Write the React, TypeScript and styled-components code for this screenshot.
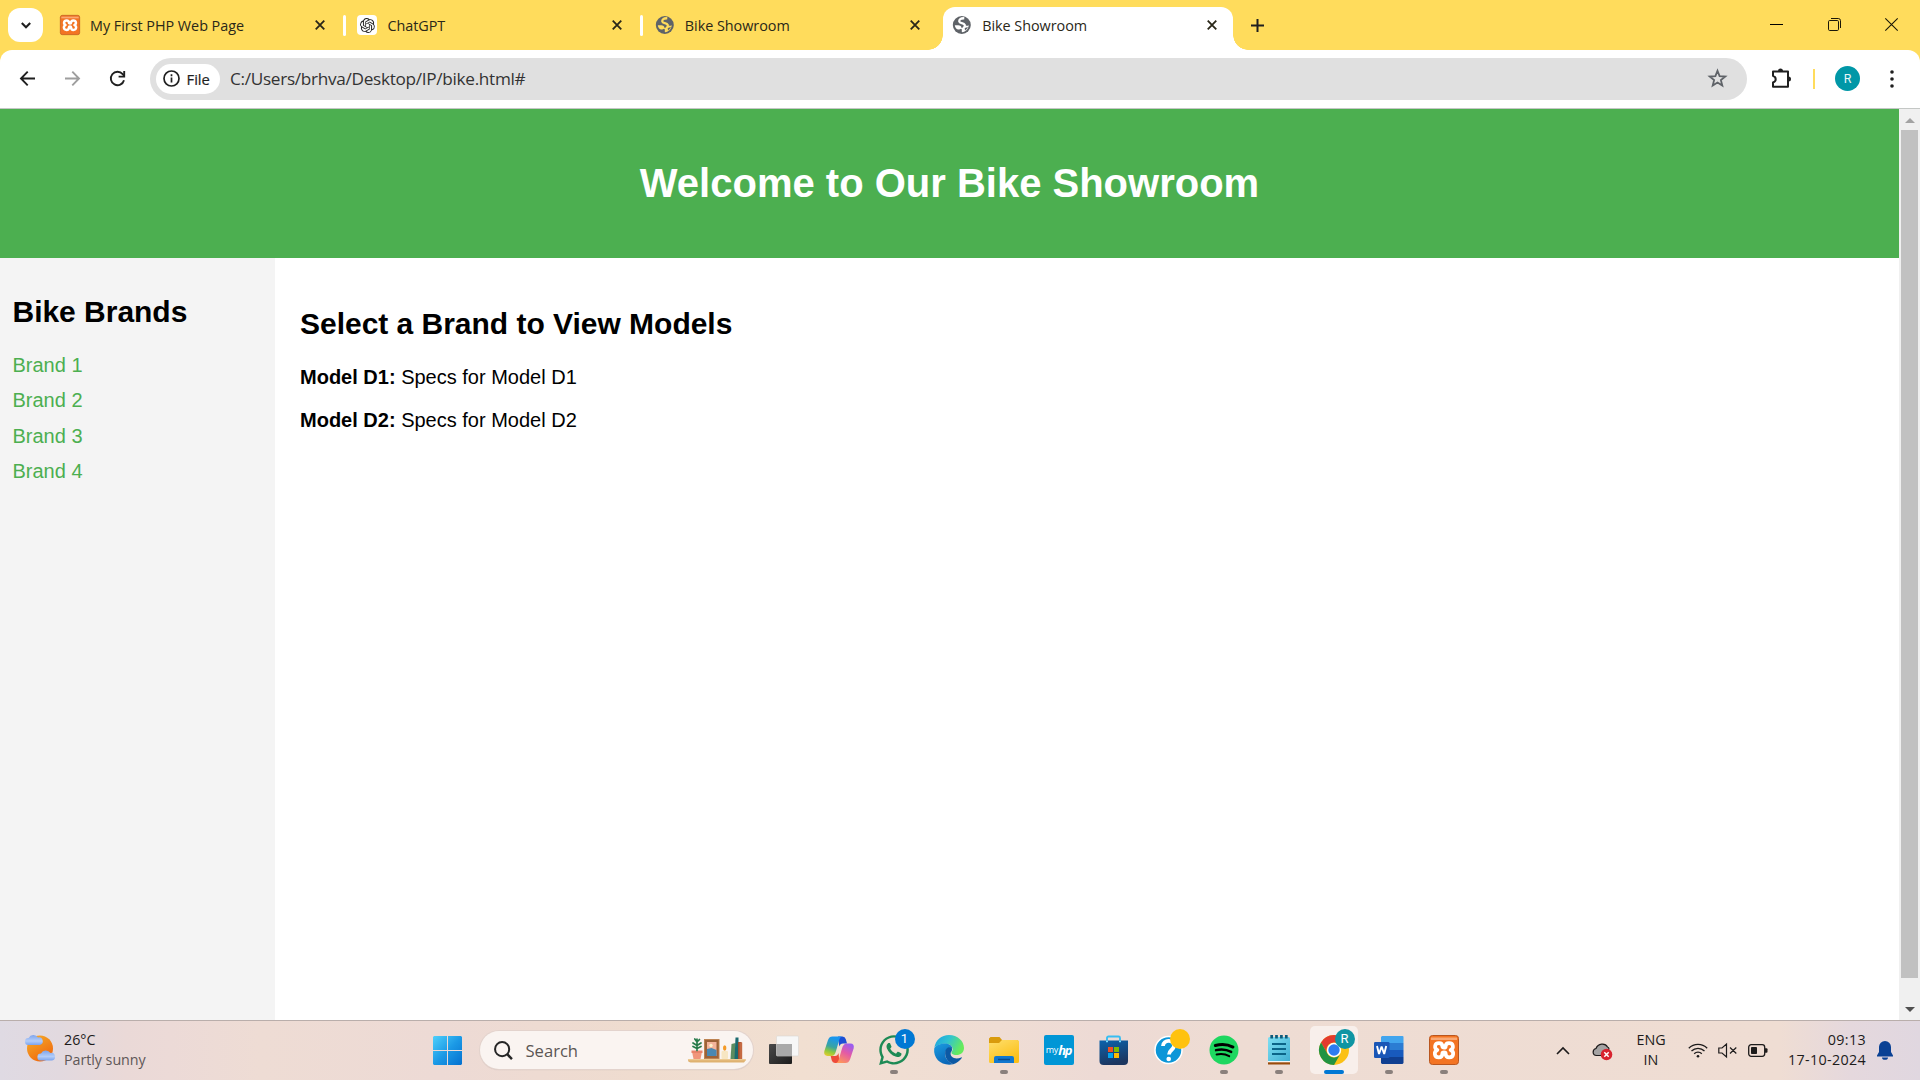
import React from 'react';
import styled, { createGlobalStyle } from 'styled-components';
import { SiOpenai } from 'react-icons/si';
import { FaWhatsapp } from 'react-icons/fa';

const Global = createGlobalStyle`
  * { box-sizing: border-box; }
  html, body { margin: 0; padding: 0; overflow: hidden; }
  svg { display: block; flex: none; overflow: visible; }
`;

const ui = `'Open Sans', 'Noto Sans', sans-serif`;
const yellow = '#ffdc5c';

const Screen = styled.div`
  width: 1920px;
  height: 1080px;
  display: flex;
  flex-direction: column;
  background: #fff;
  font-family: ${ui};
  overflow: hidden;
`;

/* ---------- window frame ---------- */

const TabStrip = styled.div`
  flex: none;
  height: 50px;
  display: flex;
  background: ${yellow};
`;

const TabSearch = styled.div`
  width: 35px;
  height: 34px;
  margin: 8px 7.5px 0 8px;
  border-radius: 12px;
  background: #fff;
  display: flex;
  align-items: center;
  justify-content: center;
`;

const TabBox = styled.div<{ $active?: boolean }>`
  position: relative;
  width: 290px;
  height: 43px;
  margin: 7px 7.4px 0 0;
  padding: 0 15.5px 7px 9.5px;
  display: flex;
  align-items: center;
  border-radius: 12px 12px 0 0;
  background: ${(p) => (p.$active ? '#fff' : 'transparent')};
  ${(p) =>
    p.$active &&
    `&::before, &::after {
      content: '';
      position: absolute;
      bottom: 0;
      width: 15px;
      height: 15px;
    }
    &::before { left: -15px; background: radial-gradient(circle at 0 0, transparent 14.5px, #fff 15px); }
    &::after { right: -15px; background: radial-gradient(circle at 100% 0, transparent 14.5px, #fff 15px); }`}
`;

const TabTitle = styled.span`
  flex: 1;
  margin: 2px 0 0 10px;
  font-size: 14.4px;
  line-height: 20px;
  letter-spacing: -0.03px;
  color: #2a2718;
  white-space: nowrap;
`;

const TabDivider = styled.i`
  position: absolute;
  right: -5px;
  top: 8px;
  width: 3px;
  height: 21px;
  border-radius: 2px;
  background: #fff;
`;

const FaviconTile = styled.span`
  width: 20px;
  height: 20px;
  border-radius: 4px;
  background: #fff;
  display: flex;
  align-items: center;
  justify-content: center;
  color: #222;
`;

const NewTab = styled.div`
  width: 35px;
  display: flex;
  align-items: center;
  justify-content: center;
  height: 50px;
`;

const Caption = styled.div`
  margin-left: auto;
  padding-right: 22px;
  height: 49px;
  display: flex;
  align-items: center;
  gap: 44.5px;
`;

const ToolbarBack = styled.div`
  flex: none;
  height: 59px;
  background: ${yellow};
`;

const Toolbar = styled.div`
  height: 59px;
  display: flex;
  align-items: center;
  padding: 0 22px 1px 17px;
  border-bottom: 1px solid #c4c7c5;
  border-radius: 12px 12px 0 0;
  background: #fff;
`;

const NavButtons = styled.div`
  width: 133px;
  display: flex;
  gap: 24px;
`;

const Omnibox = styled.div`
  width: 1597px;
  height: 42px;
  padding: 0 19px 0 6px;
  display: flex;
  align-items: center;
  border-radius: 21px;
  background: #e0e0e0;
`;

const FileChip = styled.div`
  width: 64px;
  height: 30px;
  padding-left: 6.5px;
  display: flex;
  align-items: center;
  border-radius: 15px;
  background: #fff;
  font-size: 14.8px;
  color: #1f1f1f;
  gap: 7px;
  -webkit-text-stroke: 0.2px #1f1f1f;
`;

const Url = styled.span`
  flex: 1;
  margin: 1px 0 0 10px;
  font-size: 17.2px;
  letter-spacing: -0.3px;
  line-height: 24px;
  color: #333;
`;

const ToolbarRule = styled.i`
  width: 2px;
  height: 20px;
  margin: 0 20px 0 21px;
  background: ${yellow};
`;

const Avatar = styled.span`
  width: 25px;
  height: 25px;
  margin-right: 21px;
  border-radius: 50%;
  background: #0097a7;
  color: #e8f6f7;
  font: 12.5px/25px Roboto, sans-serif;
  text-align: center;
`;

/* ---------- web page ---------- */

const Viewport = styled.div`
  flex: none;
  height: 911px;
  display: flex;
`;

const Page = styled.div`
  width: 1899px;
  display: flex;
  flex-direction: column;
  font-family: 'Liberation Sans', Arial, sans-serif;
  font-size: 20px;
  color: #000;
`;

const Hero = styled.header`
  height: 149px;
  padding-bottom: 2px;
  display: flex;
  align-items: center;
  justify-content: center;
  background: #4caf50;
  color: #fff;
`;

const HeroTitle = styled.h1`
  margin: 0;
  font-size: 40px;
  line-height: 46px;
`;

const Columns = styled.div`
  flex: 1;
  display: flex;
`;

const Sidebar = styled.aside`
  width: 275px;
  padding: 12.5px;
  background: #f4f4f4;
`;

const Content = styled.main`
  flex: 1;
  padding: 25px;
`;

const Heading = styled.h2`
  margin: 24px 0 25px;
  font-size: 30px;
  line-height: 34px;
  letter-spacing: -0.02px;
`;

const BrandList = styled.ul`
  list-style: none;
  margin: 0;
  padding: 0;
`;

const Brand = styled.li`
  height: 23px;
  margin-bottom: 12.5px;
  line-height: 23px;
  color: #4caf50;
`;

const Model = styled.p`
  margin: 0 0 20px;
  line-height: 23px;
`;

const Scrollbar = styled.div`
  width: 21px;
  padding: 9px 2px 8px;
  display: flex;
  flex-direction: column;
  background: #f0f0f0;
`;

const Thumb = styled.div`
  height: 848px;
  margin: 7px 2px auto 0;
  background: #c1c1c1;
  width: 17px;
`;

const Arrow = styled.i<{ $down?: boolean }>`
  width: 0;
  height: 0;
  margin-left: 3.5px;
  border: 5px solid transparent;
  ${(p) => (p.$down ? 'border-top-color: #505050; border-bottom: 0;' : 'border-bottom-color: #a3a3a3; border-top: 0;')}
`;

/* ---------- taskbar ---------- */

const Taskbar = styled.footer`
  flex: none;
  height: 60px;
  display: flex;
  border-top: 1px solid #b9aeab;
  background: linear-gradient(90deg, #dfdae3 0, #e2d9df 60px, #ead9d7 125px, #ecdad7 170px, #eedcd4 260px, #eddad5 440px, #efdccf 640px,
    #f1dfd1 800px, #efddd4 1000px, #eddad5 1100px, #eedcd3 1230px, #efddd3 1780px, #e5d8dd 1850px, #e0d7e0 1920px);
`;

const Weather = styled.div`
  width: 423.5px;
  padding: 12px 0 0 25px;
  display: flex;
  gap: 9px;
`;

const WeatherText = styled.div`
  display: flex;
  flex-direction: column;
  margin-top: -3px;
  font-size: 14.3px;
  line-height: 20px;
  color: #1d1b1b;
`;

const Faint = styled.span`
  color: #5e5757;
  letter-spacing: -0.05px;
`;

const Apps = styled.div`
  display: flex;
  padding-top: 5px;
  gap: 7px;
`;

const AppButton = styled.div<{ $active?: boolean }>`
  position: relative;
  width: 48px;
  height: 48px;
  display: flex;
  align-items: center;
  justify-content: center;
  border-radius: 5px;
  background: ${(p) => (p.$active ? '#f8efeb' : 'transparent')};
`;

const Running = styled.i<{ $active?: boolean }>`
  position: absolute;
  bottom: 0;
  left: ${(p) => (p.$active ? 14 : 20)}px;
  width: ${(p) => (p.$active ? 20 : 8)}px;
  height: 4px;
  border-radius: 2px;
  background: ${(p) => (p.$active ? '#0078d4' : '#8a807c')};
`;

const Badge = styled.span<{ $color: string }>`
  position: absolute;
  left: 25px;
  top: 3px;
  width: 20px;
  height: 20px;
  border-radius: 50%;
  background: ${(p) => p.$color};
  color: #fff;
  font: 13px/20px Roboto, sans-serif;
  text-align: center;
`;

const SearchBox = styled.div`
  width: 273px;
  height: 38px;
  margin: 5px 0 0 1px;
  padding: 0 5.5px 0 14px;
  display: flex;
  align-items: center;
  border-radius: 19px;
  background: #faf4f1;
  box-shadow: 0 0 0 1px #e3d3cd, 0 1px 1px #c4b5af;
`;

const SearchLabel = styled.span`
  flex: 1;
  margin-left: 13px;
  font-size: 16.6px;
  color: #5b5654;
`;

const HpTile = styled.span`
  width: 30px;
  height: 30px;
  border-radius: 2px;
  display: flex;
  align-items: center;
  justify-content: center;
  background: #0096d6;
  color: #fff;
  font: 9px/28px ${ui};
  letter-spacing: -0.2px;
  & > b { font-size: 13px; font-style: italic; letter-spacing: -1.2px; }
`;

const Tray = styled.div`
  flex: 1;
  display: flex;
  align-items: center;
  justify-content: flex-end;
  padding-right: 27px;
  color: #1d1b1b;
`;

const TrayText = styled.div<{ $align: string; $w: number; $spacing?: number }>`
  width: ${(p) => p.$w}px;
  margin-top: -2px;
  text-align: ${(p) => p.$align};
  font-size: 14.3px;
  letter-spacing: ${(p) => p.$spacing ?? 0}px;
  line-height: 20px;
  white-space: nowrap;
`;

const Gap = styled.i<{ $w: number }>`
  width: ${(p) => p.$w}px;
  flex: none;
`;

/* ---------- drawings ---------- */

const Xampp = ({ size }: { size: number }) => (
  <svg width={size} height={size} viewBox="0 0 30 30">
    <rect x="0.5" y="0.5" width="29" height="29" rx="3" fill="#f37423" stroke="#b9561f" />
    <path d="M2 2.5h26v2.5H2z" fill="#f9a873" />
    <path
      d="M10 8.200c-4.800 0-5 5.200-1.600 6.800c-4 1.800-3.200 7.400 1.400 7.400c3.300 0 3.600-2.400 3.600-4.200c0-1.300 3.200-1.300 3.200 0c0 1.800.3 4.200 3.600 4.200c4.600 0 5.400-5.600 1.400-7.400c3.400-1.600 3.200-6.800-1.600-6.800c-2.800 0-3.400 1.800-3.400 3.500c0 1.300-3.200 1.300-3.200 0c0-1.700-.6-3.500-3.400-3.500z"
      fill="none"
      stroke="#fff"
      strokeWidth="3.700"
      strokeLinejoin="round"
    />
  </svg>
);

const Globe = ({ bg }: { bg: string }) => (
  <svg width="20" height="20" viewBox="0 0 20 20">
    <circle cx="9.800" cy="10" r="9" fill="#5f6368" />
    <path d="M12.300 3.300C8.500 3 7 4.800 7.300 6.600c.4 2.200 4.600.9 5.400 3.300c.3 1 .2 1.900-.2 2.600" fill="none" stroke={bg} strokeWidth="2.300" />
    <path d="M2.800 10.200h3.400c2 0 3.300 1.200 3.400 2.700c1.300.2 1.300-1.600 2.800-1.900c1.500-.2 2.600.2 4.300-.7c-.1 3.700-3 6.700-6.600 6.900c-.9-.9.400-2.300-.6-3.200c-.9-.8-1.800.7-3 .6c-1.900-.2-3.600-2.200-3.700-4.400z" fill={bg} />
    <path d="M12.700 13.200c1.200-.9 2.300-.8 3.200-1.200c-.5 1.500-1.500 2.700-2.900 3.600z" fill="#5f6368" />
  </svg>
);

const Cross = () => (
  <svg width="10" height="10" viewBox="0 0 11 11">
    <path d="M.8.800l9.400 9.400M10.200.800L.8 10.200" stroke="#2a2718" strokeWidth="2" />
  </svg>
);

const Edge = () => (
  <svg width="30" height="30" viewBox="0 0 30 30">
    <defs>
      <linearGradient id="eTop" x1="0" y1="0" x2="1" y2="0.400">
        <stop offset="0" stopColor="#199fe4" />
        <stop offset="0.500" stopColor="#31c3d0" />
        <stop offset="1" stopColor="#66eb5c" />
      </linearGradient>
      <linearGradient id="eLeft" x1="0" y1="0" x2="0.500" y2="1">
        <stop offset="0" stopColor="#1b9de2" />
        <stop offset="1" stopColor="#0a67b8" />
      </linearGradient>
    </defs>
    <path d="M.3 13C1.500 5 7.500 0 15 0c8.500 0 15 6 15 13c0 4.500-3.500 7-7.500 7c-4 0-5.800-1.700-4.700-3.200c2.400-3.300 0-7.800-6-8C6.500 8.600 2 10.500.3 13z" fill="url(#eTop)" />
    <path d="M.2 13.500C2 10 6.500 8.600 11 8.600c4 .1 7 2 7.500 4.800c-1.500-1-4-.8-5.800 1.100c-3.500 4-1.200 11.500 6.500 14.700C8.500 31.500-1 24.500.2 13.500z" fill="url(#eLeft)" />
    <path d="M17.500 12.600c-3-1.300-5.700.4-6.300 4c-.8 6 3 11 8 12.600c3.500-1 6.600-3.200 8.600-6.200c.3-.6-.1-.9-.7-.6c-5 2.500-11.500.5-10.400-4.800c.2-.8.700-1 1-1.700c.5-1 .4-2.200-.2-3.300z" fill="#0c59a4" />
  </svg>
);

const Chrome = () => (
  <svg width="30" height="30" viewBox="0 0 30 30">
    <circle cx="15" cy="15" r="15" fill="#fbc116" />
    <path d="M2 7.500A15 15 0 0 1 28 7.500H15a7.500 7.500 0 0 0-6.500 11.250z" fill="#e33b2e" />
    <path d="M2 7.500L8.500 18.750A7.500 7.500 0 0 0 21.500 18.750L15 30A15 15 0 0 1 2 7.500z" fill="#229342" />
    <circle cx="15" cy="15" r="7.200" fill="#fff" />
    <circle cx="15" cy="15" r="5.700" fill="#2c7cf0" />
  </svg>
);

const WeatherIcon = () => (
  <svg width="30" height="30" viewBox="0 0 30 30">
    <defs>
      <linearGradient id="sun" x1="0" y1="0" x2="0.600" y2="1">
        <stop offset="0" stopColor="#f5b02a" />
        <stop offset="1" stopColor="#f0690f" />
      </linearGradient>
      <linearGradient id="cl" x1="0" y1="0" x2="0" y2="1">
        <stop offset="0" stopColor="#7ea4ec" />
        <stop offset="0.600" stopColor="#b3cdf9" />
        <stop offset="1" stopColor="#7ba3ee" />
      </linearGradient>
    </defs>
    <circle cx="15" cy="15.500" r="13" fill="url(#sun)" />
    <path d="M3.400 12a3.500 3.500 0 0 1 .2-7A5.400 5.400 0 0 1 13 4.500A3.800 3.800 0 0 1 14.800 12z" fill="url(#cl)" />
    <path d="M15.800 27.500a3.500 3.500 0 0 1 .2-7A5.400 5.400 0 0 1 25.400 20A3.800 3.800 0 0 1 27 27.500z" fill="url(#cl)" />
  </svg>
);

const WindowsLogo = () => (
  <svg width="29" height="29" viewBox="0 0 29 29">
    <defs>
      <linearGradient id="win" gradientUnits="userSpaceOnUse" x1="0" y1="0" x2="29" y2="29">
        <stop offset="0" stopColor="#4fd0fb" />
        <stop offset="0.500" stopColor="#1c9ae6" />
        <stop offset="1" stopColor="#0470cf" />
      </linearGradient>
    </defs>
    <path d="M1 0h13v14H0V1zM15 0h13l1 1v13H15zM0 15h14v14H1l-1-1zM15 15h14v13l-1 1H15z" fill="url(#win)" />
  </svg>
);

const Shelf = () => (
  <svg width="60" height="27" viewBox="0 0 60 27">
    <path d="M1 22h57l1 1-2 2.500H3.500A3 3 0 0 1 1 22z" fill="#dfb271" />
    <path d="M1 22h57.500v1.300H1z" fill="#edca93" />
    <path d="M5 14.500h10l-1.500 7.500h-7z" fill="#f0957a" />
    <path d="M4.500 13.500h11v2.500h-11z" fill="#e8836a" />
    <path d="M10 13.500V2M10 11.500l-4-2M10 11.500l4-2M10 8.500L6 6M10 8.500l4-2.500M10 5L7.800 2M10 5l2.500-2.500" stroke="#277a4a" strokeWidth="1.700" strokeLinecap="round" />
    <rect x="17.500" y="2.500" width="14.500" height="19" fill="#9c6238" stroke="#bd8352" />
    <rect x="20" y="5" width="9.500" height="14" fill="#f3b49b" />
    <path d="M20 12l4.500-1 5 2v6H20z" fill="#4988b2" />
    <circle cx="24" cy="8.500" r="1.700" fill="#fff0c8" />
    <rect x="34.500" y="14" width="6.500" height="8" rx="1" fill="#f7e6c3" />
    <ellipse cx="37.700" cy="11" rx="1.700" ry="2.800" fill="#f49a27" />
    <path d="M44.500 7l4-1v16h-5z" fill="#5c8c60" />
    <path d="M48.500.5H51.500V22H47.500z" fill="#1b6a70" />
    <path d="M51 5h3.500v17H51z" fill="#a24c2e" />
    <path d="M52.500 5.500h2.700V22h-2.700z" fill="#c56a42" />
  </svg>
);

const TaskView = () => (
  <svg width="30" height="30" viewBox="0 0 30 30">
    <defs>
      <linearGradient id="tvd" x1="0" y1="0" x2="1" y2="1">
        <stop offset="0" stopColor="#4a4a4a" />
        <stop offset="1" stopColor="#1c1c1c" />
      </linearGradient>
    </defs>
    <rect x="0" y="9" width="23" height="20" rx="1" fill="url(#tvd)" />
    <rect x="7.500" y="1" width="22" height="20" rx="1" fill="#f7f7f7" stroke="#d9d6d4" strokeWidth="0.600" />
    <path d="M7.500 9H23v12H8.500l-1-1z" fill="#a9a9a9" />
  </svg>
);

const Copilot = () => (
  <svg width="30" height="28" viewBox="0 0 30 28">
    <defs>
      <linearGradient id="cpa" x1="0.300" y1="0" x2="0" y2="1">
        <stop offset="0" stopColor="#1996ef" />
        <stop offset="0.450" stopColor="#3aa4a0" />
        <stop offset="0.700" stopColor="#8ec83e" />
        <stop offset="1" stopColor="#f6cd2a" />
      </linearGradient>
      <linearGradient id="cpb" x1="0.700" y1="0" x2="0.200" y2="1">
        <stop offset="0" stopColor="#9a5df0" />
        <stop offset="0.450" stopColor="#e45aa5" />
        <stop offset="1" stopColor="#ff9a58" />
      </linearGradient>
    </defs>
    <path d="M14 0.500h4.500a4 4 0 0 1 3.300 2.800L23 7.500h-4c-2 0-3 1-3.800 3z" fill="#1b4fd6" />
    <path d="M15.500 27H11a4 4 0 0 1-3.300-2.800L6.700 20H11c2 0 2.800-1 3.500-3z" fill="#ee4b3a" />
    <path d="M8.500.5h9.300c-1.800.7-2.300 2.500-3 5L12 15c-.8 3-2 5-5 5H3.500C.8 20-.3 18 .3 15.300L4 4C5 1.500 6.200.5 8.500.5z" fill="url(#cpa)" />
    <path d="M21.500 27h-9.300c1.800-.7 2.300-2.500 3-5L18 12.500c.8-3 2-5 5-5h3.500c2.700 0 3.800 2 3.200 4.700L26 23.500C25 26 23.800 27 21.500 27z" fill="url(#cpb)" />
  </svg>
);

const Folder = () => (
  <svg width="30" height="28" viewBox="0 0 30 28">
    <defs>
      <linearGradient id="fol" x1="0" y1="0" x2="0.600" y2="1">
        <stop offset="0" stopColor="#ffdf6d" />
        <stop offset="1" stopColor="#fbbf16" />
      </linearGradient>
    </defs>
    <path d="M1.500 1h9l2.500 3h16v5H0V2.500z" fill="#d99b0c" />
    <path d="M0 7h10l3-3h15.500L30 5v20.500a1.500 1.500 0 0 1-1.500 1.500h-27A1.500 1.500 0 0 1 0 25.500z" fill="url(#fol)" />
    <path d="M5 27v-5a2 2 0 0 1 2-2h16a2 2 0 0 1 2 2v5z" fill="#1178cf" />
    <path d="M9 23.500h12" stroke="#0a4c8e" strokeWidth="1.500" />
  </svg>
);

const Store = () => (
  <svg width="30" height="30" viewBox="0 0 30 30">
    <defs>
      <linearGradient id="sto" x1="0" y1="0" x2="0.300" y2="1">
        <stop offset="0" stopColor="#0b63ad" />
        <stop offset="1" stopColor="#1c3660" />
      </linearGradient>
    </defs>
    <path d="M8 7V3a1.500 1.500 0 0 1 1.500-1.500h10A1.500 1.500 0 0 1 21 3v4" fill="none" stroke="#38bdf2" strokeWidth="1.900" />
    <path d="M.5 5.500h28.500V26a4 4 0 0 1-4 4H4.500a4 4 0 0 1-4-4z" fill="url(#sto)" />
    <path d="M9 12h5v5H9z" fill="#f25022" />
    <path d="M15 12h5v5h-5z" fill="#7fba00" />
    <path d="M9 18h5v5H9z" fill="#00a4ef" />
    <path d="M15 18h5v5h-5z" fill="#ffb900" />
    <path d="M8 5.500v1.800M21 5.500v1.800" stroke="#7fe0ff" strokeWidth="1.900" />
  </svg>
);

const Help = () => (
  <svg width="30" height="30" viewBox="0 0 30 30">
    <circle cx="14.500" cy="15" r="13.500" fill="#0c96d8" stroke="#fff" strokeWidth="1.500" />
    <path d="M9 11c0-7 11.500-6.500 11 0c-.3 4-5 4.200-5 8.500" fill="none" stroke="#fff" strokeWidth="3.800" />
    <circle cx="14.700" cy="24" r="2.300" fill="#fff" />
  </svg>
);

const Spotify = () => (
  <svg width="30" height="30" viewBox="0 0 30 30">
    <circle cx="15" cy="15" r="14.500" fill="#1ed760" />
    <path d="M6.300 10.500c6.300-1.800 12.500-1.200 17.700 1.600" fill="none" stroke="#000" strokeWidth="2.900" strokeLinecap="round" />
    <path d="M7 15.200c5.500-1.400 10.500-.8 15.200 1.700" fill="none" stroke="#000" strokeWidth="2.400" strokeLinecap="round" />
    <path d="M7.600 19.600c4.600-1 8.800-.5 12.600 1.600" fill="none" stroke="#000" strokeWidth="2" strokeLinecap="round" />
  </svg>
);

const Notepad = () => (
  <svg width="22" height="30" viewBox="0 0 22 30">
    <defs>
      <linearGradient id="np" x1="0" y1="0" x2="1" y2="1">
        <stop offset="0" stopColor="#7fe0f3" />
        <stop offset="1" stopColor="#41aed2" />
      </linearGradient>
    </defs>
    <path d="M0 26h22v3.500H0z" fill="#9a4b0b" />
    <path d="M0 24h22v3.300H0z" fill="#f6f6f6" />
    <path d="M0 3.500a1.500 1.500 0 0 1 1.500-1.500h19A1.500 1.500 0 0 1 22 3.500V26H0z" fill="url(#np)" />
    <path d="M3.700 0v3.500M8.500 0v3.500M13.400 0v3.500M18.300 0v3.500" stroke="#0d5a7a" strokeWidth="2.700" />
    <path d="M4 9h14M4 14h14M4 19h14" stroke="#0b6488" strokeWidth="1.800" />
  </svg>
);

const Word = () => (
  <svg width="30" height="28" viewBox="0 0 30 28">
    <path d="M8 0h20.500A1 1 0 0 1 29.500 1v6H7V1z" fill="#42a5ee" />
    <path d="M7 7h22.500v7H7z" fill="#2b7cd3" />
    <path d="M7 14h22.500v7H7z" fill="#185abd" />
    <path d="M7 21h22.500v6l-1 1H8l-1-1z" fill="#103f91" />
    <rect x="0" y="6" width="15.500" height="16" rx="1.300" fill="#1a56b6" />
    <path d="M3 10l2 8 2.600-7.500L10.200 18l2-8" fill="none" stroke="#fff" strokeWidth="1.900" strokeLinejoin="bevel" />
  </svg>
);

const tabs = [
  { title: 'My First PHP Web Page', icon: <Xampp size={20} /> },
  { title: 'ChatGPT', icon: <FaviconTile><SiOpenai size={15} /></FaviconTile> },
  { title: 'Bike Showroom', icon: <Globe bg={yellow} /> },
  { title: 'Bike Showroom', icon: <Globe bg="#fff" />, active: true },
];

const brands = ['Brand 1', 'Brand 2', 'Brand 3', 'Brand 4'];
const models = ['Model D1', 'Model D2'];

export default function App() {
  return (
    <Screen>
      <Global />
      <TabStrip>
        <TabSearch>
          <svg width="10" height="7" viewBox="0 0 10 7">
            <path d="M.8 1l4.200 4.200L9.200 1" fill="none" stroke="#1f1f1f" strokeWidth="2.100" />
          </svg>
        </TabSearch>
        {tabs.map((t, i) => (
          <TabBox key={i} $active={t.active}>
            {t.icon}
            <TabTitle>{t.title}</TabTitle>
            <Cross />
            {i < 2 && <TabDivider />}
          </TabBox>
        ))}
        <NewTab>
          <svg width="13" height="13" viewBox="0 0 13 13">
            <path d="M6.500 0v13M0 6.500h13" stroke="#1f1f1f" strokeWidth="2" />
          </svg>
        </NewTab>
        <Caption>
          <svg width="13" height="13" viewBox="0 0 13 13"><path d="M0 6.500h13" stroke="#000" strokeWidth="1" /></svg>
          <svg width="13" height="13" viewBox="0 0 13 13" fill="none" stroke="#1a1708">
            <rect x="0.500" y="2.500" width="10" height="10" rx="1.200" />
            <path d="M3 .5h7.300a2.200 2.200 0 0 1 2.200 2.200V10" />
          </svg>
          <svg width="13" height="13" viewBox="0 0 13 13"><path d="M.3.300l12.400 12.400M12.700.300L.3 12.700" stroke="#1a1708" strokeWidth="1.100" /></svg>
        </Caption>
      </TabStrip>

      <ToolbarBack>
        <Toolbar>
          <NavButtons>
            <svg width="21" height="21" viewBox="0 0 21 21"><path d="M18 10.500H4M10.700 3.700L4 10.500l6.700 6.800" fill="none" stroke="#1f1f1f" strokeWidth="1.900" /></svg>
            <svg width="21" height="21" viewBox="0 0 21 21"><path d="M3 10.500h14M10.300 3.700l6.700 6.800-6.700 6.800" fill="none" stroke="#9e9e9e" strokeWidth="1.900" /></svg>
            <svg width="21" height="21" viewBox="0 0 21 21">
              <path d="M17 12.200a6.700 6.700 0 1 1-1.300-6L17.200 8" fill="none" stroke="#1f1f1f" strokeWidth="1.900" />
              <path d="M17.200 3v5.600h-5.600" fill="none" stroke="#1f1f1f" strokeWidth="1.900" />
            </svg>
          </NavButtons>
          <Omnibox>
            <FileChip>
              <svg width="17" height="17" viewBox="0 0 17 17">
                <circle cx="8.500" cy="8.500" r="7.500" fill="none" stroke="#1f1f1f" strokeWidth="1.700" />
                <path d="M8.500 7.500v5M8.500 4.300v1.900" stroke="#1f1f1f" strokeWidth="1.700" />
              </svg>
              File
            </FileChip>
            <Url>C:/Users/brhva/Desktop/IP/bike.html#</Url>
            <svg width="21" height="21" viewBox="0 0 21 21">
              <path d="M10.500 2.800l2.100 5.300 5.700.4-4.400 3.600 1.400 5.500-4.800-3-4.800 3 1.400-5.500L2.700 8.500l5.700-.4z" fill="none" stroke="#5f6368" strokeWidth="1.800" />
            </svg>
          </Omnibox>
          <Gap $w={24} />
          <svg width="21" height="21" viewBox="0 0 21 21">
            <path d="M2 3.500h15v15.300H2v-4.400c3.600-1.200 3.600-5.300 0-6.500z" fill="none" stroke="#1f1f1f" strokeWidth="2" strokeLinejoin="round" />
            <path d="M7 3a2.500 2.500 0 0 1 5 0zM17.500 8.500a2.500 2.500 0 0 1 0 5z" fill="#1f1f1f" />
          </svg>
          <ToolbarRule />
          <Avatar>R</Avatar>
          <Gap $w={9} />
          <svg width="4" height="18" viewBox="0 0 4 18" fill="#1f1f1f">
            <circle cx="2" cy="2" r="1.800" /><circle cx="2" cy="9" r="1.800" /><circle cx="2" cy="16" r="1.800" />
          </svg>
        </Toolbar>
      </ToolbarBack>

      <Viewport>
        <Page>
          <Hero><HeroTitle>Welcome to Our Bike Showroom</HeroTitle></Hero>
          <Columns>
            <Sidebar>
              <Heading>Bike Brands</Heading>
              <BrandList>{brands.map((b) => <Brand key={b}>{b}</Brand>)}</BrandList>
            </Sidebar>
            <Content>
              <Heading>Select a Brand to View Models</Heading>
              {models.map((m) => <Model key={m}><b>{m}:</b> Specs for {m}</Model>)}
            </Content>
          </Columns>
        </Page>
        <Scrollbar>
          <Arrow />
          <Thumb />
          <Arrow $down />
        </Scrollbar>
      </Viewport>

      <Taskbar>
        <Weather>
          <WeatherIcon />
          <WeatherText><span>26°C</span><Faint>Partly sunny</Faint></WeatherText>
        </Weather>
        <Apps>
          <AppButton><WindowsLogo /></AppButton>
          <SearchBox>
            <svg width="19" height="19" viewBox="0 0 18 18">
              <circle cx="7.700" cy="7.700" r="6.700" fill="none" stroke="#252525" strokeWidth="1.900" />
              <path d="M12.500 12.500l4.500 4.700" stroke="#252525" strokeWidth="2.300" />
            </svg>
            <SearchLabel>Search</SearchLabel>
            <Shelf />
          </SearchBox>
          <AppButton><TaskView /></AppButton>
          <AppButton><Copilot /></AppButton>
          <AppButton><FaWhatsapp size={34} color="#1d8a55" /><Badge $color="#0078d4">1</Badge><Running /></AppButton>
          <AppButton><Edge /></AppButton>
          <AppButton><Folder /><Running /></AppButton>
          <AppButton><HpTile>my<b>hp</b></HpTile></AppButton>
          <AppButton><Store /></AppButton>
          <AppButton><Help /><Badge $color="#ffc20e" /></AppButton>
          <AppButton><Spotify /><Running /></AppButton>
          <AppButton><Notepad /><Running /></AppButton>
          <AppButton $active><Chrome /><Badge $color="#0f95a3">R</Badge><Running $active /></AppButton>
          <AppButton><Word /><Running /></AppButton>
          <AppButton><Xampp size={30} /><Running /></AppButton>
        </Apps>
        <Tray>
          <svg width="14" height="8" viewBox="0 0 14 8"><path d="M1 7l6-6 6 6" fill="none" stroke="#1d1b1b" strokeWidth="1.600" /></svg>
          <Gap $w={22} />
          <svg width="22" height="18" viewBox="0 0 22 18">
            <path d="M4.500 13.500C0 13 .2 7.500 4 6.500C6 1.500 13 .5 15.500 5c1 .3 1.500 1 1.500 2l-7 6.500z" fill="#a5a3a3" stroke="#1d1b1b" strokeWidth="1.200" />
            <circle cx="14.500" cy="12.500" r="5.800" fill="#d8232f" />
            <path d="M12.300 10.300l4.400 4.400M16.700 10.300l-4.400 4.400" stroke="#fff" strokeWidth="1.500" />
          </svg>
          <Gap $w={17} />
          <TrayText $align="center" $w={40}>ENG<br />IN</TrayText>
          <Gap $w={17} />
          <svg width="20" height="15" viewBox="0 0 20 15" fill="none" stroke="#1d1b1b" strokeWidth="1.300">
            <path d="M.8 5.200a13 13 0 0 1 18.400 0M3.500 8a9.200 9.200 0 0 1 13 0M6.200 10.700a5.400 5.400 0 0 1 7.600 0" />
            <circle cx="10" cy="13.200" r="1.300" fill="#1d1b1b" stroke="none" />
          </svg>
          <Gap $w={10} />
          <svg width="19" height="15" viewBox="0 0 19 15" fill="none" stroke="#1d1b1b" strokeWidth="1.200">
            <path d="M.8 5h3.200l4.500-4v13L4 10H.8zM12 4.500l6.300 6M18.300 4.500l-6.300 6" />
          </svg>
          <Gap $w={11} />
          <svg width="20" height="13" viewBox="0 0 20 13">
            <rect x="0.700" y="0.700" width="16" height="11.600" rx="2.500" fill="none" stroke="#1d1b1b" strokeWidth="1.300" />
            <rect x="3" y="3" width="6" height="7" rx="0.800" fill="#1d1b1b" />
            <path d="M17 4.300h1.500a1 1 0 0 1 1 1v2.400a1 1 0 0 1-1 1H17z" fill="#1d1b1b" />
          </svg>
          <Gap $w={18} />
          <TrayText $align="right" $w={80} $spacing={0.35}>09:13<br />17-10-2024</TrayText>
          <Gap $w={11} />
          <svg width="16" height="19" viewBox="0 0 16 19" fill="#0a4194">
            <path d="M8 0a6 6 0 0 1 6 6v5l2 3.500V15.500H0V14.500L2 11V6a6 6 0 0 1 6-6zM5 16.500h6a3 2.300 0 0 1-6 0z" />
          </svg>
        </Tray>
      </Taskbar>
    </Screen>
  );
}
